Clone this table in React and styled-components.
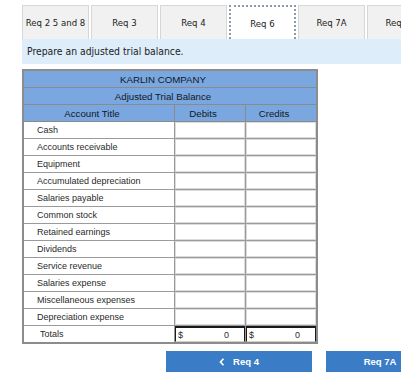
import React from "react";
import styled, { createGlobalStyle } from "styled-components";

const Global = createGlobalStyle`
  html, body { margin: 0; padding: 0; background: #fff; }
  body { width: 401px; height: 389px; overflow: hidden; }
`;

const Page = styled.div`
  width: 379px;
  padding: 5px 0 0 22px;
`;

const TabBar = styled.div`
  display: flex;
  gap: 2px;
  width: 420px;
`;

const Tab = styled.div`
  flex: 0 0 auto;
  box-sizing: border-box;
  width: 67px;
  height: 34px;
  display: flex;
  align-items: center;
  justify-content: center;
  background: ${(p) => (p.$active ? "#fff" : "#f1f1f1")};
  border: ${(p) => (p.$active ? "2px dotted #8d9ab0" : "1px solid #d6d6d6")};
  border-bottom: none;
  font-family: "DejaVu Sans Condensed", "DejaVu Sans", sans-serif;
  font-size: 9.5px;
  color: #222;
  white-space: nowrap;
`;

const Instruction = styled.div`
  height: 25px;
  line-height: 25px;
  padding-left: 5px;
  background: #ddedfa;
  font-family: "DejaVu Sans Condensed", "DejaVu Sans", sans-serif;
  font-size: 10.3px;
  color: #222;
`;

const Table = styled.table`
  margin-top: 5px;
  width: 296px;
  border-collapse: collapse;
  border: 2px solid #8c8c8c;
  font-family: "Liberation Sans", Arial, sans-serif;
  font-size: 9px;
  color: #2a2a2a;
`;

const HeadCell = styled.th`
  height: 16px;
  padding: 0 14px 0 0;
  background: #7ba7e1;
  border: 1px solid #8a8a8a;
  font-weight: normal;
  font-size: 9.7px;
  color: #101824;
  text-align: center;
`;

const TitleCell = styled.td`
  height: 16px;
  padding: 0 0 0 ${(p) => (p.$total ? "16px" : "13px")};
  border: 1px solid #9a9a9a;
  white-space: nowrap;
`;

const AmountCell = styled.td`
  width: 70px;
  height: 16px;
  padding: 0;
  border: 1px solid #9a9a9a;
`;

const Field = styled.div`
  box-sizing: border-box;
  height: 16px;
  display: flex;
  align-items: center;
  justify-content: space-between;
  padding: 0 15px 0 2px;
  border: ${(p) => (p.$total ? "1px solid #1a1a1a" : "1px solid #dcdcdc")};
  border-top: ${(p) => (p.$total ? "2px solid #1a1a1a" : "1px solid #dcdcdc")};
  border-bottom: ${(p) => (p.$total ? "1px solid #cfcfcf" : "1px solid #dcdcdc")};
`;

const Nav = styled.div`
  display: flex;
  gap: 14px;
  margin: 7px 0 0 144px;
  width: 300px;
`;

const NavButton = styled.div`
  flex: 0 0 auto;
  box-sizing: border-box;
  width: ${(p) => p.$w}px;
  height: 21px;
  display: flex;
  align-items: center;
  justify-content: center;
  gap: 8px;
  background: #3b7cc6;
  color: #fff;
  font-family: "Liberation Sans", Arial, sans-serif;
  font-weight: bold;
  font-size: 9.5px;
`;

const tabs = ["Req 2 5 and 8", "Req 3", "Req 4", "Req 6", "Req 7A", "Req 7B"];

const accounts = [
  "Cash",
  "Accounts receivable",
  "Equipment",
  "Accumulated depreciation",
  "Salaries payable",
  "Common stock",
  "Retained earnings",
  "Dividends",
  "Service revenue",
  "Salaries expense",
  "Miscellaneous expenses",
  "Depreciation expense",
];

export default function App() {
  return (
    <>
      <Global />
      <Page>
        <TabBar>
          {tabs.map((t) => (
            <Tab key={t} $active={t === "Req 6"}>
              {t}
            </Tab>
          ))}
        </TabBar>
        <Instruction>Prepare an adjusted trial balance.</Instruction>
        <Table>
          <thead>
            <tr>
              <HeadCell colSpan={3}>KARLIN COMPANY</HeadCell>
            </tr>
            <tr>
              <HeadCell colSpan={3}>Adjusted Trial Balance</HeadCell>
            </tr>
            <tr>
              <HeadCell>Account Title</HeadCell>
              <HeadCell>Debits</HeadCell>
              <HeadCell>Credits</HeadCell>
            </tr>
          </thead>
          <tbody>
            {accounts.map((a) => (
              <tr key={a}>
                <TitleCell>{a}</TitleCell>
                <AmountCell>
                  <Field />
                </AmountCell>
                <AmountCell>
                  <Field />
                </AmountCell>
              </tr>
            ))}
            <tr>
              <TitleCell $total>Totals</TitleCell>
              <AmountCell>
                <Field $total>
                  <span>$</span>
                  <span>0</span>
                </Field>
              </AmountCell>
              <AmountCell>
                <Field $total>
                  <span>$</span>
                  <span>0</span>
                </Field>
              </AmountCell>
            </tr>
          </tbody>
        </Table>
        <Nav>
          <NavButton $w={146}>
            <svg width="6" height="8" viewBox="0 0 6 8">
              <path d="M4.5 0.8 L1.5 4 L4.5 7.2" stroke="#fff" strokeWidth="1.6" fill="none" />
            </svg>
            <span>Req 4</span>
          </NavButton>
          <NavButton $w={108}>Req 7A</NavButton>
        </Nav>
      </Page>
    </>
  );
}
